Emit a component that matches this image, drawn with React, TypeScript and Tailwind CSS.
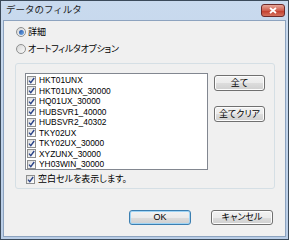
import type { ReactNode } from "react";

const items = [
  "HKT01UNX",
  "HKT01UNX_30000",
  "HQ01UX_30000",
  "HUBSVR1_40000",
  "HUBSVR2_40302",
  "TKY02UX",
  "TKY02UX_30000",
  "XYZUNX_30000",
  "YH03WIN_30000",
];

function CheckBox() {
  return (
    <span className="flex h-[9px] w-[9px] shrink-0 items-center justify-center border border-[#8e8f8f] bg-gradient-to-br from-[#dcdcdc] to-white">
      <svg viewBox="0 0 7 7" className="h-[7px] w-[7px]" aria-hidden>
        <path d="M1 3.6 L2.8 5.6 L6.2 1" fill="none" stroke="#2b4488" strokeWidth="1.4" />
      </svg>
    </span>
  );
}

function Radio({ checked }: { checked?: boolean }) {
  return (
    <span className="flex h-[10px] w-[10px] shrink-0 items-center justify-center rounded-full border border-[#8e8f8f] bg-gradient-to-br from-[#d6d6d6] to-[#fafafa]">
      {checked && (
        <span className="h-[5px] w-[5px] rounded-full bg-gradient-to-br from-[#1c4fa8] to-[#7fb3e8]" />
      )}
    </span>
  );
}

function Button({ children, primary, side }: { children: ReactNode; primary?: boolean; side?: boolean }) {
  return (
    <button
      type="button"
      className={
        (side ? "h-[16px] w-[51px] " : "h-[15px] w-[62px] ") +
        (primary
          ? "flex items-center justify-center rounded-[3px] border border-[#3c7fb1] bg-[linear-gradient(#f2f2f2_0%,#ebebeb_50%,#dddddd_51%,#cfcfcf_100%)] text-[9px] leading-none text-black shadow-[inset_0_0_0_1px_#9fd4f5]"
          : "flex items-center justify-center rounded-[3px] border border-[#707070] bg-[linear-gradient(#f2f2f2_0%,#ebebeb_50%,#dddddd_51%,#cfcfcf_100%)] text-[9px] leading-none text-black shadow-[inset_0_0_0_1px_#fcfcfc]")
      }
    >
      {children}
    </button>
  );
}

export default function App() {
  return (
    <div className="h-[240px] w-[289px] overflow-hidden bg-white font-['Liberation_Sans','Noto_Sans_CJK_JP',sans-serif] [font-feature-settings:'palt']">
      <div className="flex h-full w-full flex-col border border-[#3b4a5a] bg-[linear-gradient(#c9daee,#b9cde6)] px-[2px] pb-[2px]">
        <div className="flex h-[19px] shrink-0 items-start justify-between">
          <span className="pl-[3px] pt-[4px] text-[9.5px] leading-none text-[#1e1e1e] [font-feature-settings:normal]">
            データのフィルタ
          </span>
          <span className="mr-[1px] mt-[3px] flex h-[13px] w-[24px] items-center justify-center rounded-[3px] border border-[#6d2a2a] bg-[linear-gradient(#e6a699,#cf5f4f_50%,#c23a2a_51%,#d4725f)]">
            <svg viewBox="0 0 8 7" className="h-[7px] w-[8px]" aria-hidden>
              <path d="M1 1 L7 6 M7 1 L1 6" stroke="white" strokeWidth="1.8" />
            </svg>
          </span>
        </div>
        <div className="flex flex-1 flex-col border border-[#8da3bf] bg-[#f0f0f0] text-[9px] text-black">
          <div className="flex flex-col gap-[7px] pl-[12px] pt-[6px]">
            <label className="flex h-[10px] items-center gap-[2px]">
              <Radio checked />
              <span className="leading-none">詳細</span>
            </label>
            <label className="flex h-[10px] items-center gap-[2px]">
              <Radio />
              <span className="leading-none tracking-[-0.3px]">オートフィルタオプション</span>
            </label>
          </div>
          <div className="ml-[11px] mt-[9px] flex h-[126px] w-[260px] flex-col rounded-[3px] border border-[#d5dfe5] px-[9px] pt-[9px]">
            <div className="flex gap-[6px]">
              <div className="h-[97px] w-[186px] border border-[#828790] bg-white pl-[1px] pt-[1px]">
                {items.map((item) => (
                  <div key={item} className="flex h-[10.5px] items-center gap-[3px]">
                    <CheckBox />
                    <span className="text-[8.4px] leading-none text-black">{item}</span>
                  </div>
                ))}
              </div>
              <div className="flex flex-col gap-[15px] pt-[2px]">
                <Button side>全て</Button>
                <Button side>全てクリア</Button>
              </div>
            </div>
            <label className="ml-[1px] mt-[5px] flex items-center gap-[3px]">
              <CheckBox />
              <span className="leading-none">空白セルを表示します。</span>
            </label>
          </div>
          <div className="mr-[12px] mt-[21px] flex justify-end gap-[20px]">
            <Button primary>OK</Button>
            <Button>キャンセル</Button>
          </div>
        </div>
      </div>
    </div>
  );
}
